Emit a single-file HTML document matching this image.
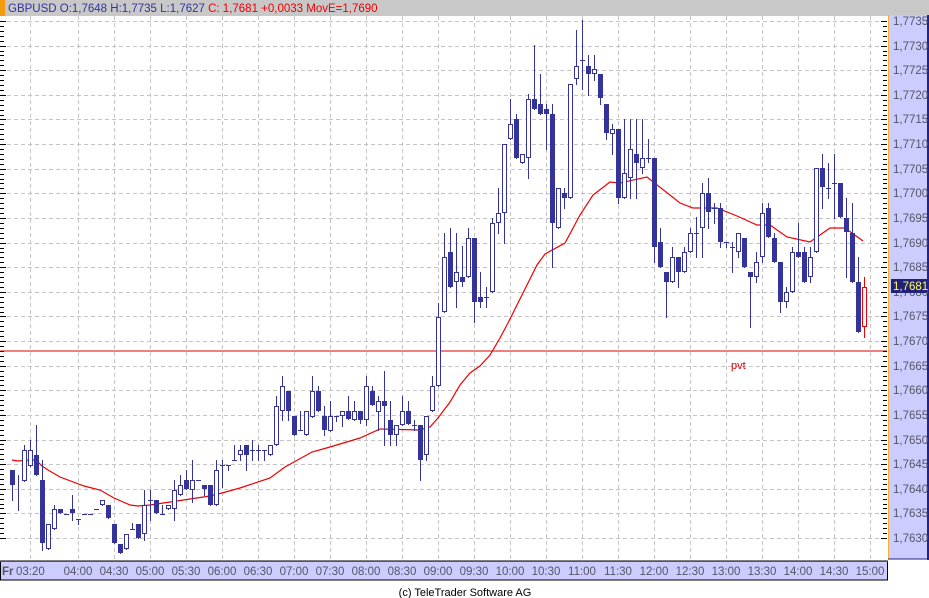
<!DOCTYPE html>
<html><head><meta charset="utf-8"><style>
html,body{margin:0;padding:0;background:#fff;width:929px;height:598px;overflow:hidden;font-family:"Liberation Sans",sans-serif}
</style></head><body>
<svg id="s" width="929" height="598" xmlns="http://www.w3.org/2000/svg" style="position:absolute;left:0;top:0;font-family:'Liberation Sans',sans-serif">
<rect x="0" y="0" width="929" height="598" fill="#fff"/>
<rect x="0" y="0" width="929" height="16" fill="#c8c8c8"/>
<rect x="0" y="0" width="5" height="16" fill="#f39c12"/>
<text x="8" y="12" font-size="11.5" fill="#333399">GBPUSD O:1,7648 H:1,7735 L:1,7627 <tspan fill="#ee0000">C: 1,7681 +0,0033 MovE=1,7690</tspan></text>
<g id="grid"></g>
<g id="ma"></g>
<line x1="0" y1="351" x2="887" y2="351" stroke="#dd0000" stroke-width="1"/>
<text x="731" y="369" font-size="11" fill="#dd0000">pvt</text>
<g id="c"></g>
<rect x="888.5" y="15.5" width="39" height="543" fill="#ccccff" stroke="none"/>
<line x1="888.5" y1="15" x2="888.5" y2="559" stroke="#f0b030"/>
<line x1="928" y1="15" x2="928" y2="560" stroke="#222288" stroke-width="2"/>
<line x1="888" y1="559" x2="929" y2="559" stroke="#222288" stroke-width="1"/>
<g id="ax"></g>
<rect x="0.5" y="561" width="887" height="19" fill="#ccccff" stroke="#000" stroke-width="1"/>
<line x1="0" y1="561.5" x2="888" y2="561.5" stroke="#555"/>
<g id="tx" font-size="11.5" fill="#555566"></g>
<text x="465" y="596" font-size="11" fill="#000" text-anchor="middle">(c) TeleTrader Software AG</text>
</svg>
<script>
var NS="http://www.w3.org/2000/svg";
function el(p,t,a,txt){var e=document.createElementNS(NS,t);for(var k in a)e.setAttribute(k,a[k]);if(txt!=null)e.textContent=txt;document.getElementById(p).appendChild(e);return e;}
var Y=function(k){return 21+24.62*k;};
for(var k=0;k<=21;k++){var y=Math.round(Y(k))+0.5;el("grid","line",{x1:0,y1:y,x2:887,y2:y,stroke:"#c4c4c4","stroke-dasharray":"4,3"});}
var vx=[30];for(var j=0;j<=22;j++)vx.push(78+36*j);
vx.forEach(function(x){el("grid","line",{x1:x+0.5,y1:16,x2:x+0.5,y2:560,stroke:"#c4c4c4","stroke-dasharray":"4,3"});});
for(var k=0;k<=105;k++){var y=Math.round(21+24.62*k/5)+0.5;if(y>560)break;var big=k%5==0;el("grid","line",{x1:0,y1:y,x2:big?6:4,y2:y,stroke:"#000"});el("ax","line",{x1:big?881:883,y1:y,x2:887,y2:y,stroke:"#000"});}
for(var k=0;k<=21;k++){var p=(1.7735-0.0005*k).toFixed(4).replace(".",",");el("ax","text",{x:893,y:Math.round(Y(k))+4,"font-size":"11.5",fill:"#555566"},p);}
el("ax","rect",{x:891,y:279,width:36,height:14,fill:"#222277"});
el("ax","text",{x:893,y:290,"font-size":"11.5",fill:"#ffff66"},"1,7681");
el("tx","text",{x:2,y:575,"font-weight":"bold"},"Fr");
el("tx","text",{x:16,y:575},"03:20");
var lab=["04:00","04:30","05:00","05:30","06:00","06:30","07:00","07:30","08:00","08:30","09:00","09:30","10:00","10:30","11:00","11:30","12:00","12:30","13:00","13:30","14:00","14:30","15:00"];
lab.forEach(function(t,j){el("tx","text",{x:78+36*j,y:575,"text-anchor":"middle"},t);});
var ma=[[12,460],[18,461],[30,460],[36,460],[42,466],[48,470],[60,477],[84,486],[100,490],[114,498],[130,505],[138,506],[150,505],[170,502],[190,499],[210,496],[222,493],[240,488],[270,478],[285,467],[312,452],[330,447],[360,438],[380,429],[420,430],[430,427],[438,418],[450,402],[460,385],[470,373],[480,366],[490,355],[500,338],[508,323],[537,265],[545,254],[565,243],[580,215],[593,195],[610,182],[620,183],[647,177],[680,203],[693,208],[717,208],[737,216],[757,225],[770,225],[787,237],[810,242],[830,228],[845,228],[863,241]];
el("ma","polyline",{points:ma.map(function(p){return p.join(",")}).join(" "),fill:"none",stroke:"#ee0000","stroke-width":1.2});
var d=[[470,500,470,485,1],[475,510,485,486,0],[445,481,450,481,0],[440,466,450,466,0],[425,475,455,475,1],[460,550,480,543,1],[524,549,524,549,0],[505,529,509,529,0],[509,513,509,513,1],[514,514,514,514,0],[495,520,509,513,1],[519,524,519,519,0],[514,514,514,514,0],[514,514,514,514,0],[509,509,509,509,0],[500,505,500,505,0],[505,518,505,518,1],[524,543,524,543,1],[544,553,544,553,1],[534,549,534,549,0],[523,529,529,529,0],[524,538,524,538,1],[490,540,505,534,0],[490,520,500,500,0],[500,513,500,513,1],[505,514,514,514,0],[505,509,505,509,0],[480,520,490,509,0],[475,495,485,495,0],[470,489,480,489,1],[460,502,480,490,0],[480,480,480,480,0],[485,495,485,489,1],[485,505,485,505,1],[460,505,470,505,0],[460,487,465,465,0],[465,470,465,465,0],[445,460,460,460,0],[445,460,450,455,0],[445,470,445,455,1],[440,460,450,450,0],[445,460,450,450,0],[450,460,450,450,0],[445,455,445,455,0],[396,445,406,445,0],[376,420,386,411,0],[391,420,391,411,1],[416,435,416,435,1],[411,430,430,430,0],[411,435,411,435,0],[376,417,391,417,0],[386,411,391,411,1],[406,435,416,430,1],[401,431,416,431,0],[416,421,416,416,0],[411,426,411,416,0],[396,419,411,419,1],[401,420,411,420,0],[411,423,411,420,1],[376,425,386,420,0],[386,405,391,405,1],[396,430,401,412,0],[371,445,401,406,1],[401,445,420,435,1],[425,445,425,435,0],[396,425,411,425,0],[401,424,411,424,1],[420,430,425,425,0],[425,480,425,460,1],[416,460,416,455,0],[376,411,386,411,0],[303,386,317,386,0],[233,312,257,312,0],[228,287,252,287,1],[233,307,272,282,0],[246,286,277,282,1],[228,277,238,277,0],[238,322,238,302,1],[272,307,297,302,1],[287,307,297,297,0],[218,292,223,292,0],[188,233,213,223,0],[144,243,144,213,0],[99,139,124,139,0],[114,158,119,158,1],[154,163,154,163,0],[94,178,99,158,0],[45,109,99,109,1],[74,114,104,114,1],[104,149,109,114,1],[104,267,114,223,1],[188,228,188,228,0],[188,208,193,198,1],[84,198,84,198,0],[30,84,66,79,0],[20,89,60,60,0],[55,95,66,74,1],[55,80,69,74,0],[74,104,74,98,1],[104,139,104,133,1],[124,154,129,134,0],[129,203,129,198,1],[119,198,173,198,0],[119,198,149,178,0],[119,198,154,163,1],[119,173,158,168,0],[139,162,158,158,0],[158,262,158,247,1],[228,267,242,267,1],[272,317,272,282,1],[247,282,257,282,0],[257,287,257,272,1],[247,272,252,272,0],[228,252,233,252,0],[217,257,233,233,0],[183,257,193,228,0],[178,228,193,212,1],[203,223,208,208,0],[203,247,208,242,1],[242,247,242,242,0],[242,272,247,247,0],[233,257,233,252,0],[238,267,238,267,1],[272,327,272,277,1],[252,282,262,277,0],[203,262,213,257,0],[203,237,208,237,1],[233,262,238,262,1],[262,312,262,302,1],[287,307,292,302,0],[247,292,252,292,0],[223,257,252,257,1],[247,282,252,282,1],[247,282,257,277,0],[168,252,168,252,0],[154,208,168,187,1],[163,198,188,188,0],[154,218,183,183,0],[183,217,183,217,1],[198,277,218,232,1],[203,282,233,282,1],[257,332,282,332,1],[277,337,287,327,2]];
d.forEach(function(c,i){var x=12+6*i,col=c[4]==2?"#ee0000":"#333399";
el("c","line",{x1:x+0.5,y1:c[0],x2:x+0.5,y2:c[1]+1,stroke:col});
if(c[3]-c[2]<1){el("c","line",{x1:x-2,y1:c[2]+0.5,x2:x+3,y2:c[2]+0.5,stroke:col});}
else if(c[4]==1){el("c","rect",{x:x-2,y:c[2],width:5,height:c[3]-c[2],fill:col});}
else{el("c","rect",{x:x-1.5,y:c[2]+0.5,width:4,height:c[3]-c[2]-1,fill:"#fff",stroke:col});}
});
</script>
</body></html>
